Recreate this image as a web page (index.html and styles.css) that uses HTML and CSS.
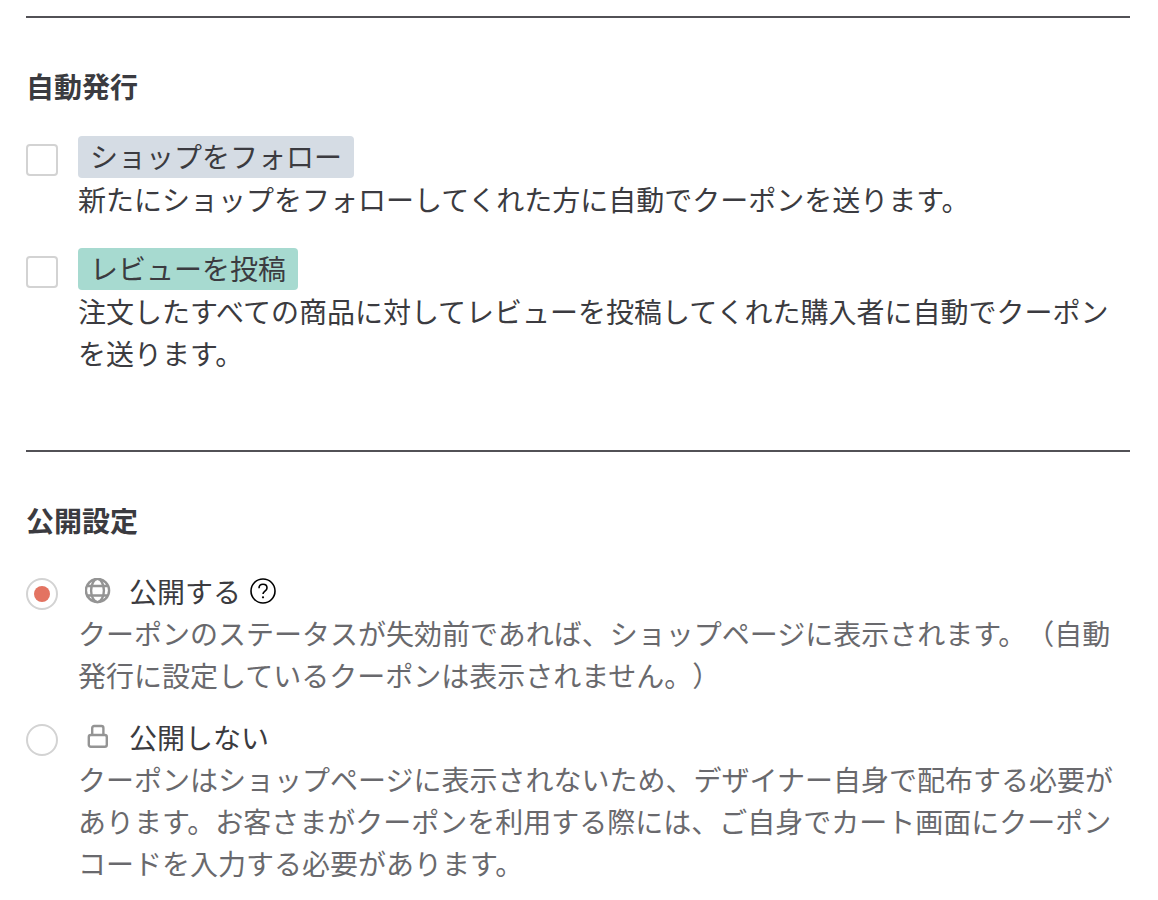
FILE: index.html
```html
<!DOCTYPE html>
<html lang="ja">
<head>
    <meta charset="UTF-8">
    <meta name="viewport" content="width=device-width, initial-scale=1.0">
    <title>クーポン設定</title>
    <link rel="stylesheet" href="styles.css">
</head>
<body>
    <form class="coupon-form">
        <!-- 自動発行 -->
        <section class="section">
            <h2 class="section-title">自動発行</h2>
            <div class="options">
                <div class="option">
                    <input type="checkbox" class="check" id="autoFollow" name="auto" value="follow">
                    <label class="option-body" for="autoFollow">
                        <span class="tag tag-follow">ショップをフォロー</span>
                        <span class="text">新たにショップをフォローしてくれた方に自動でクーポンを送ります。</span>
                    </label>
                </div>
                <div class="option">
                    <input type="checkbox" class="check" id="autoReview" name="auto" value="review">
                    <label class="option-body" for="autoReview">
                        <span class="tag tag-review">レビューを投稿</span>
                        <span class="text">注文したすべての商品に対してレビューを投稿してくれた購入者に自動でクーポンを送ります。</span>
                    </label>
                </div>
            </div>
        </section>

        <!-- 公開設定 -->
        <section class="section">
            <h2 class="section-title">公開設定</h2>
            <div class="options options-publish">
                <div class="option">
                    <input type="radio" class="radio" id="publishOn" name="publish" value="on" checked>
                    <div class="option-body">
                        <div class="option-head">
                            <svg class="icon" viewBox="0 0 26 26" aria-hidden="true">
                                <circle cx="12.5" cy="12.5" r="11.6"/>
                                <ellipse cx="12.5" cy="12.5" rx="6.4" ry="11.6"/>
                                <path d="M2 8h21M2 17.5h21"/>
                            </svg>
                            <label for="publishOn">公開する</label>
                            <button type="button" class="help" aria-label="ヘルプ">
                                <svg viewBox="0 0 26 26" aria-hidden="true">
                                    <circle cx="13" cy="13" r="12"/>
                                    <path d="M9 10.2C9 7.8 10.7 6.3 13 6.3s4 1.4 4 3.6c0 3.2-4 3.2-4 6.2"/>
                                    <circle class="dot" cx="13" cy="19.3" r="1.1"/>
                                </svg>
                            </button>
                        </div>
                        <p class="text text-sub">クーポンのステータスが失効前であれば、ショップページに表示されます。（自動発行に設定しているクーポンは表示されません。）</p>
                    </div>
                </div>
                <div class="option">
                    <input type="radio" class="radio" id="publishOff" name="publish" value="off">
                    <div class="option-body">
                        <div class="option-head">
                            <svg class="icon" viewBox="0 0 26 26" aria-hidden="true">
                                <rect x="3.8" y="11" width="18" height="11.8" rx="2"/>
                                <path d="M7.2 11V4a2 2 0 0 1 2-2h7.2a2 2 0 0 1 2 2v7"/>
                            </svg>
                            <label for="publishOff">公開しない</label>
                        </div>
                        <p class="text text-sub">クーポンはショップページに表示されないため、デザイナー自身で配布する必要があります。お客さまがクーポンを利用する際には、ご自身でカート画面にクーポンコードを入力する必要があります。</p>
                    </div>
                </div>
            </div>
        </section>
    </form>
</body>
</html>
```

FILE: styles.css
```css
* {
    box-sizing: border-box;
}
body {
    margin: 0;
    padding: 16px 28px 0 26px;
    background: #fff;
    color: #3b3b40;
    font-family: "Noto Sans CJK JP", sans-serif;
    font-size: 28px;
    line-height: 42px;
    text-spacing-trim: space-all;
}
.section {
    border-top: 2px solid #525156;
    padding: 47px 0 76px;
}
.section:last-child {
    padding-bottom: 16px;
}
.section-title {
    margin: 0 0 29px;
    font-size: 28px;
    font-weight: bold;
}
.options {
    display: flex;
    flex-direction: column;
    gap: 28px;
}
.options-publish {
    gap: 20px;
}
.option {
    display: flex;
    align-items: flex-start;
    gap: 20px;
}
.option-body {
    flex: 1;
}
.check,
.radio {
    appearance: none;
    flex: none;
    width: 32px;
    height: 32px;
    margin: 8px 0 0;
    border: 2px solid #d3d3d3;
    background: #fff;
}
.check {
    border-radius: 4px;
}
.check:checked {
    background: #e37361;
}
.radio {
    border-radius: 50%;
}
.radio:checked {
    padding: 6px;
    background: #e37361 content-box;
}
.tag {
    display: block;
    width: fit-content;
    padding: 0 12px 2px;
    border-radius: 4px;
    line-height: 40px;
}
.tag-follow {
    background: #d5dce4;
}
.tag-review {
    background: #a7dad0;
}
.text {
    display: block;
    margin: 0;
}
.text-sub {
    color: #69696d;
}
.option-head {
    display: flex;
    align-items: center;
}
.icon {
    width: 26px;
    height: 26px;
    margin: 0 18px 0 7px;
    fill: none;
    stroke: #949494;
    stroke-width: 2.4;
}
.help {
    display: flex;
    margin: 0 0 0 9px;
    padding: 0;
    border: none;
    background: none;
    cursor: pointer;
}
.help svg {
    width: 26px;
    height: 26px;
    fill: none;
    stroke: #000;
    stroke-width: 1.6;
}
.help .dot {
    fill: #000;
    stroke: none;
}
```
